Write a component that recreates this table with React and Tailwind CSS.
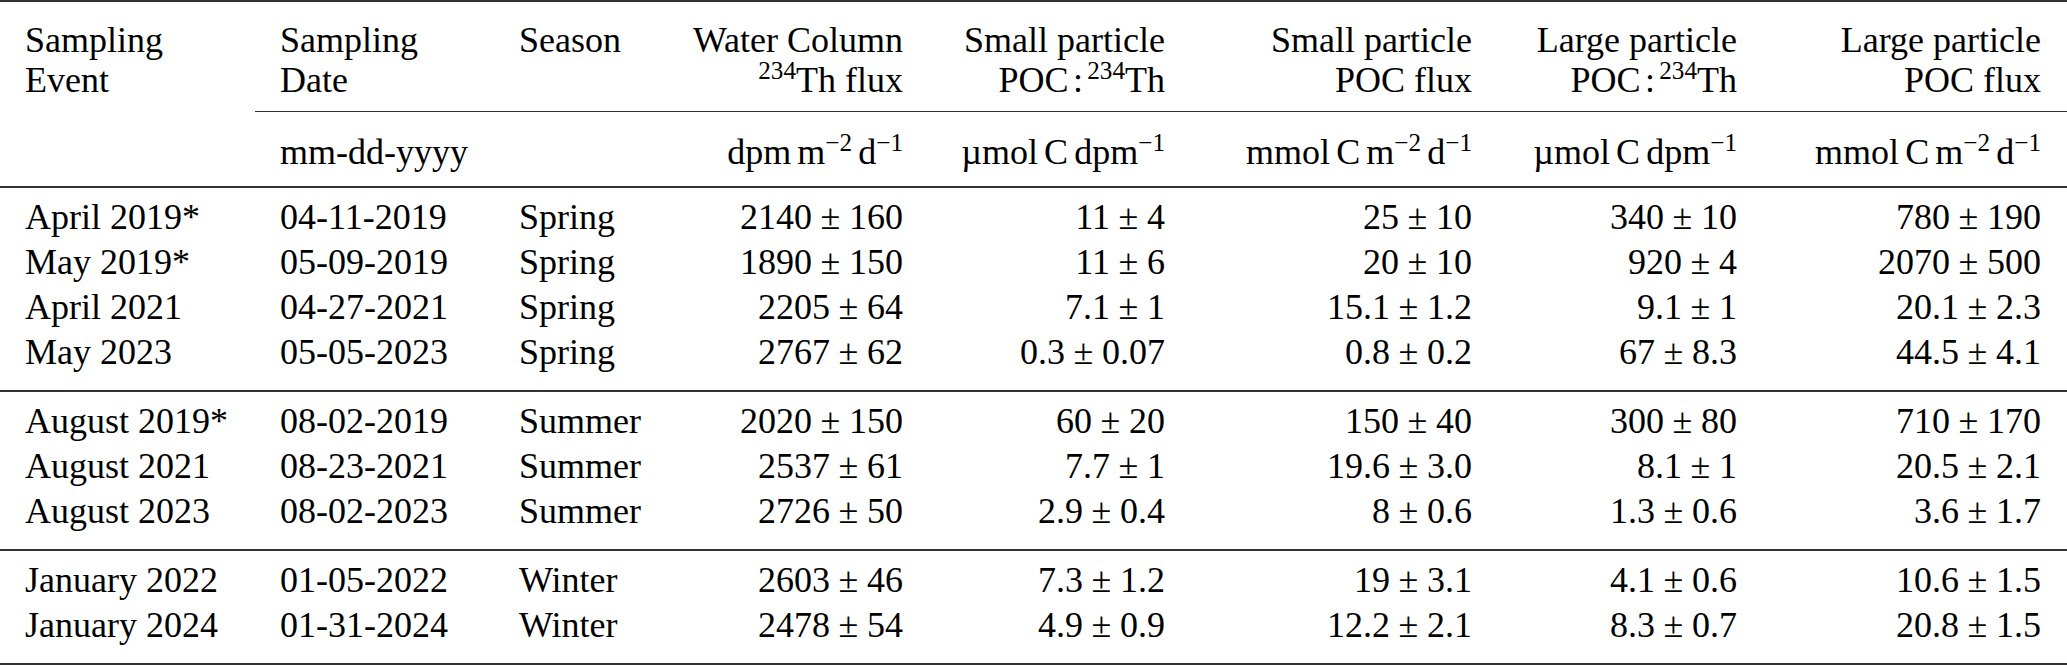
import React from 'react';

const groups = [
  [
    ['April 2019*', '04-11-2019', 'Spring', ['2140', '160'], ['11', '4'], ['25', '10'], ['340', '10'], ['780', '190']],
    ['May 2019*', '05-09-2019', 'Spring', ['1890', '150'], ['11', '6'], ['20', '10'], ['920', '4'], ['2070', '500']],
    ['April 2021', '04-27-2021', 'Spring', ['2205', '64'], ['7.1', '1'], ['15.1', '1.2'], ['9.1', '1'], ['20.1', '2.3']],
    ['May 2023', '05-05-2023', 'Spring', ['2767', '62'], ['0.3', '0.07'], ['0.8', '0.2'], ['67', '8.3'], ['44.5', '4.1']],
  ],
  [
    ['August 2019*', '08-02-2019', 'Summer', ['2020', '150'], ['60', '20'], ['150', '40'], ['300', '80'], ['710', '170']],
    ['August 2021', '08-23-2021', 'Summer', ['2537', '61'], ['7.7', '1'], ['19.6', '3.0'], ['8.1', '1'], ['20.5', '2.1']],
    ['August 2023', '08-02-2023', 'Summer', ['2726', '50'], ['2.9', '0.4'], ['8', '0.6'], ['1.3', '0.6'], ['3.6', '1.7']],
  ],
  [
    ['January 2022', '01-05-2022', 'Winter', ['2603', '46'], ['7.3', '1.2'], ['19', '3.1'], ['4.1', '0.6'], ['10.6', '1.5']],
    ['January 2024', '01-31-2024', 'Winter', ['2478', '54'], ['4.9', '0.9'], ['12.2', '2.1'], ['8.3', '0.7'], ['20.8', '1.5']],
  ],
];

// value ± error, math-style spacing round the sign
function PM({ v }) {
  return (
    <>
      {v[0]}
      <span className="mx-[0.24em]">±</span>
      {v[1]}
    </>
  );
}

function Sup({ children }) {
  return <sup className="text-[0.7em]">{children}</sup>;
}

function Ratio() {
  return (
    <>
      POC<span className="mx-[0.12em]">:</span>
      <Sup>234</Sup>Th
    </>
  );
}

function FluxUnit({ pre }) {
  return (
    <>
      {pre}
      {pre === 'mmol' && <span className="ml-[0.17em]">C</span>}
      <span className="ml-[0.17em]">m</span>
      <Sup>−2</Sup>
      <span className="ml-[0.17em]">d</span>
      <Sup>−1</Sup>
    </>
  );
}

function RatioUnit() {
  return (
    <>
      µmol<span className="ml-[0.17em]">C</span>
      <span className="ml-[0.17em]">dpm</span>
      <Sup>−1</Sup>
    </>
  );
}

export default function App() {
  return (
    <div className="bg-white text-black w-[2067px] h-[665px] overflow-hidden font-['Liberation_Serif','Times_New_Roman',serif]">
      <table className="table-fixed border-collapse w-[2067px] text-[36px] leading-[40px] font-['Liberation_Serif','Times_New_Roman',serif]">
        <colgroup>
          <col className="w-[255px]" />
          <col className="w-[239px]" />
          <col className="w-[170px]" />
          <col className="w-[264px]" />
          <col className="w-[262px]" />
          <col className="w-[307px]" />
          <col className="w-[265px]" />
          <col className="w-[305px]" />
        </colgroup>
        <thead>
          <tr className="border-t-2 border-[#333]">
            <td className="pl-[25px] pt-[18px] pb-[11px] align-top whitespace-nowrap">Sampling<br />Event</td>
            <td className="pl-[25px] pt-[18px] pb-[11px] align-top whitespace-nowrap">Sampling<br />Date</td>
            <td className="pl-[25px] pt-[18px] pb-[11px] align-top">Season</td>
            <td className="pr-[25px] pt-[18px] pb-[11px] text-right align-top whitespace-nowrap">Water Column<br /><Sup>234</Sup>Th flux</td>
            <td className="pr-[25px] pt-[18px] pb-[11px] text-right align-top whitespace-nowrap">Small particle<br /><Ratio /></td>
            <td className="pr-[25px] pt-[18px] pb-[11px] text-right align-top whitespace-nowrap">Small particle<br />POC flux</td>
            <td className="pr-[25px] pt-[18px] pb-[11px] text-right align-top whitespace-nowrap">Large particle<br /><Ratio /></td>
            <td className="pr-[26px] pt-[18px] pb-[11px] text-right align-top whitespace-nowrap">Large particle<br />POC flux</td>
          </tr>
          <tr className="border-b-2 border-[#333]">
            <td className="pt-[20px] pb-[14px]"></td>
            <td className="pl-[25px] pt-[20px] pb-[14px] border-t border-[#333]">mm-dd-yyyy</td>
            <td className="pt-[20px] pb-[14px] border-t border-[#333]"></td>
            <td className="pr-[25px] pt-[20px] pb-[14px] text-right whitespace-nowrap border-t border-[#333]"><FluxUnit pre="dpm" /></td>
            <td className="pr-[25px] pt-[20px] pb-[14px] text-right whitespace-nowrap border-t border-[#333]"><RatioUnit /></td>
            <td className="pr-[25px] pt-[20px] pb-[14px] text-right whitespace-nowrap border-t border-[#333]"><FluxUnit pre="mmol" /></td>
            <td className="pr-[25px] pt-[20px] pb-[14px] text-right whitespace-nowrap border-t border-[#333]"><RatioUnit /></td>
            <td className="pr-[26px] pt-[20px] pb-[14px] text-right whitespace-nowrap border-t border-[#333]"><FluxUnit pre="mmol" /></td>
          </tr>
        </thead>
        {groups.map((rows, g) => (
          <tbody key={g} className="border-b-2 border-[#333]">
            {rows.map((r, i) => {
              const first = i === 0;
              const last = i === rows.length - 1;
              const pad = (first ? 'pt-[7px] ' : '') + (last ? 'pb-[15px]' : '');
              return (
                <tr key={i} className="h-[45px] leading-[45px]">
                  <td className={'pl-[25px] whitespace-nowrap ' + pad}>{r[0]}</td>
                  <td className={'pl-[25px] ' + pad}>{r[1]}</td>
                  <td className={'pl-[25px] ' + pad}>{r[2]}</td>
                  <td className={'pr-[25px] text-right whitespace-nowrap ' + pad}><PM v={r[3]} /></td>
                  <td className={'pr-[25px] text-right whitespace-nowrap ' + pad}><PM v={r[4]} /></td>
                  <td className={'pr-[25px] text-right whitespace-nowrap ' + pad}><PM v={r[5]} /></td>
                  <td className={'pr-[25px] text-right whitespace-nowrap ' + pad}><PM v={r[6]} /></td>
                  <td className={'pr-[26px] text-right whitespace-nowrap ' + pad}><PM v={r[7]} /></td>
                </tr>
              );
            })}
          </tbody>
        ))}
      </table>
    </div>
  );
}
